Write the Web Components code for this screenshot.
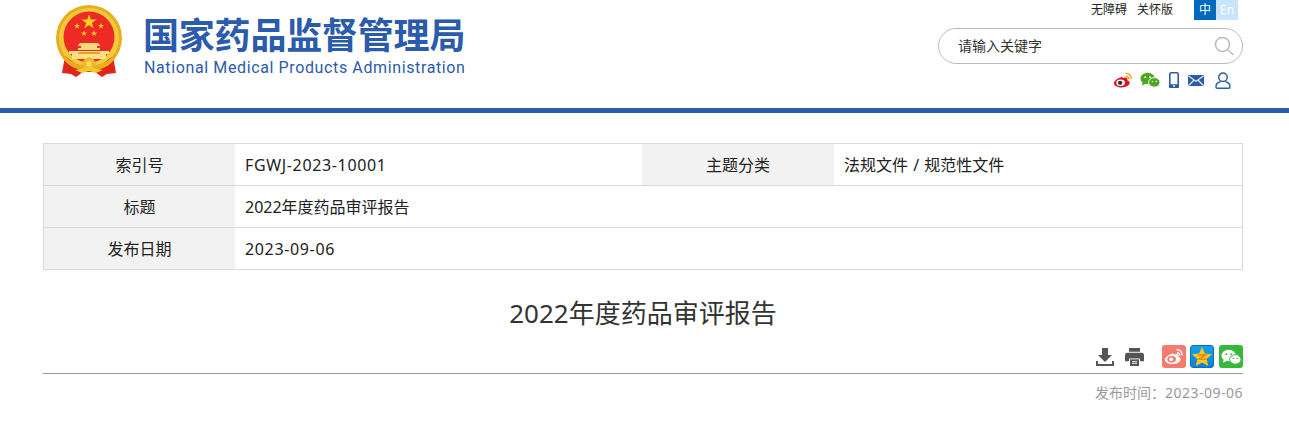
<!DOCTYPE html>
<html lang="zh">
<head>
<meta charset="utf-8">
<title>2022年度药品审评报告</title>
<style>
  html, body { margin: 0; padding: 0; background: #fff; }
  body { font-family: "Noto Sans", "Noto Sans CJK SC", sans-serif; color: #333; }
</style>
</head>
<body>
<site-header></site-header>
<main-wrap>
  <info-table>
    <info-row label="索引号" value="FGWJ-2023-10001" label2="主题分类" value2="法规文件 / 规范性文件"></info-row>
    <info-row label="标题" value="2022年度药品审评报告"></info-row>
    <info-row label="发布日期" value="2023-09-06"></info-row>
  </info-table>
  <article-head heading="2022年度药品审评报告" date-label="发布时间：" date="2023-09-06"></article-head>
</main-wrap>

<script>
const FONT = `"Noto Sans", "Noto Sans CJK SC", sans-serif`;

const headerTemplate = document.createElement("template");
headerTemplate.innerHTML = `
  <style>
    :host { display: block; height: 108px; border-bottom: 5px solid #2b5bab; font-family: ${FONT}; }
    .inner { width: 1200px; height: 108px; margin-left: 43px; display: flex; justify-content: space-between; }
    .brand { display: flex; padding: 5px 0 0 12px; }
    .emblem { width: 68px; height: 73px; flex: none; }
    .names { margin-left: 20px; }
    .cn { font: 700 36px/40px "Noto Sans CJK SC", sans-serif; color: #2b5bab; width: 322px; margin-top: 8px; white-space: nowrap; letter-spacing: -.2px; }
    .en { font: 16px/22px Roboto, sans-serif; color: #2b5bab; margin-top: 4px; margin-left: 1px; white-space: nowrap; letter-spacing: .62px; }
    .tools { width: 305px; display: flex; flex-direction: column; align-items: flex-end; }
    .top { display: flex; align-items: flex-start; height: 20px; font-size: 12px; line-height: 19px; color: #222; padding-right: 5px; }
    .top span.link { margin-right: 10px; }
    .lang { width: 22px; height: 20px; line-height: 19px; text-align: center; color: #fff; background: #0069bd; }
    .lang.en-btn { background: #c9e5fb; }
    .top .link:nth-child(2) { margin-right: 21px; }
    .search { box-sizing: border-box; width: 305px; height: 36px; margin-top: 8px; border: 1px solid #bbb; border-radius: 18px; display: flex; align-items: center; justify-content: space-between; padding: 0 8px 2px 19px; font-size: 14px; color: #333; }
    .search svg { margin-top: 2px; }
    .icons { display: flex; align-items: flex-start; margin-top: 8px; padding-right: 12px; height: 18px; }
    .icons svg + svg { margin-left: 9px; }
    .icons .wx { margin-left: 7px !important; }
    .icons .mail { margin-top: 3px; }
    .icons .user { margin-left: 11px !important; }
    svg { display: block; }
  </style>
  <div class="inner">
    <div class="brand">
      <svg class="emblem" viewBox="0 0 68 73">
        <defs>
          <path id="star" d="M0-1L.225-.31H.95L.363.118.588.81 0 .382-.588.81-.363.118-.95-.31H-.225z" fill="#fbd11c"/>
        </defs>
        <circle cx="34" cy="33" r="33" fill="#e6ad1f"/>
        <circle cx="34" cy="33" r="30" fill="#f4ca3a"/>
        <circle cx="34" cy="32" r="25.500" fill="#ee2a24"/>
        <use href="#star" transform="translate(34 17) scale(8)"/>
        <use href="#star" transform="translate(22 21) scale(3.200)"/>
        <use href="#star" transform="translate(46 21) scale(3.200)"/>
        <use href="#star" transform="translate(29 28.500) scale(3.200)"/>
        <use href="#star" transform="translate(39 28.500) scale(3.200)"/>
        <path d="M25 38h18l2.500 3H42v2h3v2H23v-2h3v-2h-3.500z" fill="#f8d97a"/>
        <path d="M14 46h40v3H14zM17 49h34v5H17z" fill="#fbe08a"/>
        <path d="M23 47h22v2H23z" fill="#e8a41f"/>
        <path d="M10 51L7 68l9 1 5 3 7-5h12l7 5 5-3 9-1-3-17-12 9H22z" fill="#e1251b"/>
        <path d="M8 48c6 9 15 12.500 26 12.500S54 57 60 48l1 4c-6 10-16 13.500-27 13.500S13 62 7 52z" fill="#e8ae1d"/>
        <circle cx="34" cy="59" r="6.500" fill="#efb826"/>
        <circle cx="34" cy="59" r="3" fill="#f8d75a"/>
        <path d="M20 65l14-3 14 3-7 3-7-2-7 2z" fill="#f4c62f"/>
      </svg>
      <div class="names">
        <div class="cn">国家药品监督管理局</div>
        <div class="en">National Medical Products Administration</div>
      </div>
    </div>
    <div class="tools">
      <div class="top">
        <span class="link">无障碍</span><span class="link">关怀版</span>
        <span class="lang">中</span><span class="lang en-btn">En</span>
      </div>
      <div class="search">
        <span>请输入关键字</span>
        <svg width="20" height="20" viewBox="0 0 20 20" fill="none" stroke="#bbb" stroke-width="1.500">
          <circle cx="8.500" cy="8.500" r="7"/><path d="M13.500 13.500l6 5.500"/>
        </svg>
      </div>
      <div class="icons">
        <svg width="20" height="16" viewBox="0 0 21 17" preserveAspectRatio="none">
          <path d="M8.500 5.500C4.500 6.500 1 9.500 1 12c0 2.800 4 4.500 8 4.500 5 0 8.500-2.500 8.500-5 0-1.800-2-2.300-2.500-2.700.5-1.500.3-3-2-3-1 0-2 .4-2.500.6-.3-1-1-1.100-2-.9z" fill="#e0141a"/>
          <ellipse cx="8" cy="11.500" rx="4.500" ry="3.500" fill="#fff"/><circle cx="7.500" cy="11.500" r="2.300" fill="#333"/>
          <path d="M13 1.500c3.500-.5 6.500 2.500 6 6M13.500 4.500c1.700-.2 3.200 1.200 3 3" fill="none" stroke="#f2a100" stroke-width="1.500"/>
        </svg>
        <svg class="wx" width="20" height="16" viewBox="0 0 21 16">
          <ellipse cx="8" cy="6.500" rx="7.500" ry="6" fill="#4ba81e"/><path d="M3 10l-1 4 4-2z" fill="#4ba81e"/>
          <ellipse cx="15" cy="10.500" rx="6" ry="5" fill="#4ba81e" stroke="#fff"/>
          <circle cx="5.500" cy="5" r="1" fill="#fff"/><circle cx="10.500" cy="5" r="1" fill="#fff"/>
          <circle cx="13" cy="9.500" r=".8" fill="#fff"/><circle cx="17" cy="9.500" r=".8" fill="#fff"/>
        </svg>
        <svg width="10" height="16" viewBox="0 0 10 17" preserveAspectRatio="none">
          <rect x=".8" y=".8" width="8.400" height="15.400" rx="1.500" fill="#fff" stroke="#2b5bab" stroke-width="1.600"/>
          <rect x="0" y="13" width="10" height="4" rx="1" fill="#2b5bab"/><circle cx="5" cy="14.800" r="1" fill="#fff"/>
        </svg>
        <svg class="mail" width="16" height="11" viewBox="0 0 16 12" preserveAspectRatio="none">
          <rect width="16" height="12" rx="1" fill="#2b5bab"/>
          <path d="M.5 1L8 7l7.500-6M.5 11.500L6 5.500M15.500 11.500L10 5.500" fill="none" stroke="#fff" stroke-width="1.200"/>
        </svg>
        <svg class="user" width="16" height="17" viewBox="0 0 17 18" fill="none" stroke="#2b5bab" stroke-width="1.500" preserveAspectRatio="none">
          <circle cx="8.500" cy="5.500" r="4.500"/><path d="M6 10c-3 .8-5 3-5 5.500 0 1 .5 1.700 1.500 1.700h12c1 0 1.500-.7 1.500-1.700 0-2.500-2-4.700-5-5.500"/>
        </svg>
      </div>
    </div>
  </div>
`;

class SiteHeader extends HTMLElement {
  constructor() {
    super();
    this.attachShadow({ mode: "open" });
    this.shadowRoot.appendChild(headerTemplate.content.cloneNode(true));
  }
}

class MainWrap extends HTMLElement {
  constructor() {
    super();
    this.attachShadow({ mode: "open" }).innerHTML = `
      <style>
        :host { display: block; width: 1200px; margin-left: 43px; padding-top: 30px; }
      </style>
      <slot></slot>
    `;
  }
}

class InfoTable extends HTMLElement {
  constructor() {
    super();
    this.attachShadow({ mode: "open" }).innerHTML = `
      <style>
        :host { display: block; box-sizing: border-box; border: 1px solid #d9d9d9; border-bottom: 0; font-family: ${FONT}; font-size: 16px; color: #222; }
      </style>
      <slot></slot>
    `;
  }
}

class InfoRow extends HTMLElement {
  constructor() {
    super();
    const second = this.hasAttribute("label2")
      ? `<div class="k k2">${this.getAttribute("label2")}</div><div class="v spaced">${this.getAttribute("value2")}</div>`
      : "";
    const value = this.getAttribute("value");
    // the latin-only values run a little wide in the reference
    const latin = /^[\x00-\x7f]+$/.test(value);
    this.attachShadow({ mode: "open" }).innerHTML = `
      <style>
        :host { display: flex; height: 42px; box-sizing: border-box; border-bottom: 1px solid #d9d9d9; }
        .k, .v { height: 41px; line-height: 43px; overflow: hidden; }
        .k { width: 191px; flex: none; background: #f2f2f2; text-align: center; }
        .k2 { width: 192px; }
        .v { padding-left: 10px; }
        .v1 { width: 397px; flex: none; }
        .v1.full { width: auto; }
        .latin { letter-spacing: .65px; }
        .spaced { word-spacing: 1px; }
      </style>
      <div class="k">${this.getAttribute("label")}</div>
      <div class="v v1 ${second ? "" : "full"} ${latin ? "latin" : ""}">${value}</div>
      ${second}
    `;
  }
}

class ArticleHead extends HTMLElement {
  constructor() {
    super();
    this.attachShadow({ mode: "open" }).innerHTML = `
      <style>
        :host { display: block; font-family: ${FONT}; }
        h1 { margin: 0; padding-top: 24px; height: 47px; font-size: 26px; line-height: 38px; font-weight: 400; text-align: center; color: #333; }
        .share { display: flex; justify-content: flex-end; align-items: flex-start; height: 33px; padding-top: 4px; box-sizing: border-box; border-bottom: 1px solid #999; }
        .share svg { display: block; }
        .dl { margin: 3px 11px 0 0; }
        .pr { margin: 3px 18px 0 0; }
        .btn { width: 24px; height: 23px; border-radius: 3px; margin-left: 5px; display: flex; align-items: center; justify-content: center; box-sizing: border-box; }
        .btn.first { margin-left: 0; }
        .btn.qz { margin-left: 4px; border: 1px solid #0a6fb8; background: linear-gradient(#19a0ec, #0b82d6); }
        .date { text-align: right; font-size: 14px; line-height: 20px; color: #999; margin-top: 9px; }
        .date b { font-weight: 400; letter-spacing: .5px; }
      </style>
      <h1>${this.getAttribute("heading")}</h1>
      <div class="share">
        <svg class="dl" width="18" height="18" viewBox="0 0 18 18" fill="#555">
          <path d="M6 0h6v7h4l-7 7-7-7h4z"/><path d="M0 13h2v3h14v-3h2v5H0z"/>
        </svg>
        <svg class="pr" width="19" height="18" viewBox="0 0 19 19" fill="#555" preserveAspectRatio="none">
          <path d="M4 0h11v4H4zM2.500 5h14A2.500 2.500 0 0 1 19 7.500V14h-4v-3H4v3H0V7.500A2.500 2.500 0 0 1 2.500 5z"/><path d="M5 12h9v7H5z"/>
          <path d="M7 14h5v1H7zM7 16h5v1H7z" fill="#fff"/>
        </svg>
        <div class="btn first" style="background:#f47b6d">
          <svg width="20" height="17" viewBox="0 0 21 17">
            <path d="M8.500 5.500C4.500 6.500 1 9.500 1 12c0 2.800 4 4.500 8 4.500 5 0 8.500-2.500 8.500-5 0-1.800-2-2.300-2.500-2.700.5-1.500.3-3-2-3-1 0-2 .4-2.500.6-.3-1-1-1.100-2-.9z" fill="#fff"/>
            <ellipse cx="8" cy="11.500" rx="4.500" ry="3.500" fill="#f47b6d"/><circle cx="7.500" cy="11.500" r="2" fill="#fff"/>
            <path d="M13 1.500c3.500-.5 6.500 2.500 6 6M13.500 4.500c1.700-.2 3.200 1.200 3 3" fill="none" stroke="#fff" stroke-width="1.500"/>
          </svg>
        </div>
        <div class="btn qz">
          <svg width="20" height="19" viewBox="0 0 22 21">
            <path d="M11 0l3.200 7.200 7.800.8-5.900 5.200 1.800 7.800L11 17l-6.900 4 1.800-7.800L0 8l7.800-.8z" fill="#fcc81e"/>
            <path d="M7 8.500h8l-7 5h8" fill="none" stroke="#e8891a" stroke-width="1.800"/>
          </svg>
        </div>
        <div class="btn" style="background:#37b83c">
          <svg width="20" height="16" viewBox="0 0 21 16">
            <ellipse cx="8" cy="6.500" rx="7.500" ry="6" fill="#fff"/><path d="M3 10l-1 4 4-2z" fill="#fff"/>
            <ellipse cx="15" cy="10.500" rx="6" ry="5" fill="#fff" stroke="#37b83c"/>
            <circle cx="5.500" cy="5" r="1" fill="#37b83c"/><circle cx="10.500" cy="5" r="1" fill="#37b83c"/>
            <circle cx="13" cy="9.500" r=".8" fill="#37b83c"/><circle cx="17" cy="9.500" r=".8" fill="#37b83c"/>
          </svg>
        </div>
      </div>
      <div class="date">${this.getAttribute("date-label")}<b>${this.getAttribute("date")}</b></div>
    `;
  }
}

customElements.define("site-header", SiteHeader);
customElements.define("main-wrap", MainWrap);
customElements.define("info-table", InfoTable);
customElements.define("info-row", InfoRow);
customElements.define("article-head", ArticleHead);
</script>
</body>
</html>
